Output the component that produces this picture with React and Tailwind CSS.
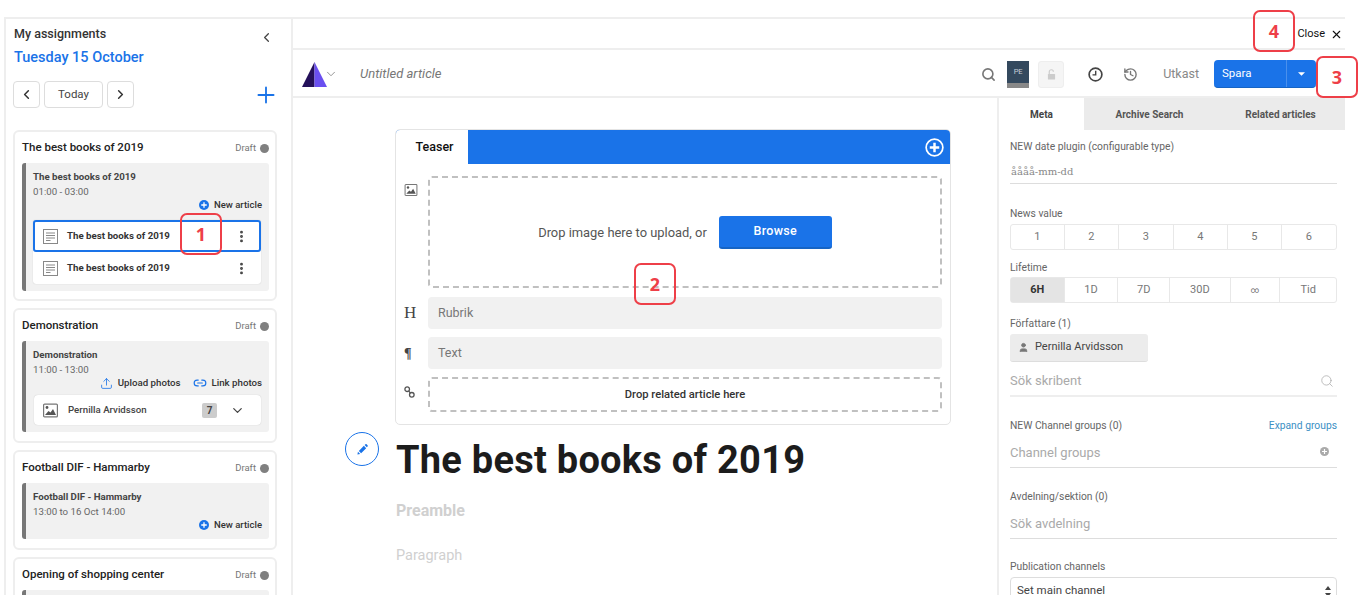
import React from 'react';
import { ChevronLeft, ChevronRight, ChevronDown, Plus, Search, X, User, Upload, Link2, History, MoreVertical } from 'lucide-react';

const PlusCircle = ({ className }) => (
    <svg viewBox="0 0 20 20" className={className}>
        <circle cx="10" cy="10" r="10" fill="currentColor" />
        <path d="M10 4.5v11M4.5 10h11" stroke="#fff" strokeWidth="2.6" />
    </svg>
);

const DocIcon = () => (
    <svg viewBox="0 0 15 15" className="w-[15px] h-[15px] shrink-0" fill="none" stroke="#888" strokeWidth="1">
        <rect x="0.5" y="0.5" width="14" height="14" fill="#fff" />
        <path d="M3 4h9M3 6.5h9M3 9h9M3 11.5h4.5" />
    </svg>
);

const PictureIcon = ({ className }) => (
    <svg viewBox="0 0 15 14" className={className}>
        <rect x="0.6" y="0.6" width="13.8" height="12.8" rx="1" fill="#fff" stroke="#777" strokeWidth="1.2" />
        <circle cx="4" cy="4" r="1.4" fill="#555" />
        <path d="M2 11.5 5.5 7.5 7.5 9 10 5.5 13 11.5Z" fill="#555" />
    </svg>
);

const LinkOutline = ({ className }) => (
    <svg viewBox="0 0 11 12" className={className} fill="none" stroke="#555" strokeWidth="1.3">
        <circle cx="3.2" cy="3.2" r="2.3" />
        <circle cx="7.8" cy="8.8" r="2.3" />
        <path d="M4.6 4.8 6.4 7" />
    </svg>
);

const Pencil = () => (
    <svg viewBox="0 0 12 12" className="w-[11px] h-[11px]" fill="#1a73e8">
        <path d="M0.5 11.5 1 8.5 3.5 11ZM2 7.5 7.5 2 10 4.5 4.5 10ZM8.3 1.2 9.2.4a1 1 0 0 1 1.3 0l1 1a1 1 0 0 1 0 1.3l-.8.9Z" />
    </svg>
);

const ClockIcon = () => (
    <svg viewBox="0 0 16 16" className="w-[15px] h-[15px]" fill="none" stroke="#444" strokeWidth="1.8">
        <circle cx="8" cy="8" r="6.8" />
        <path d="M8.2 4v4.4H4.8" strokeWidth="1.5" />
    </svg>
);

const OpenLock = () => (
    <svg viewBox="0 0 10 12" className="w-[9px] h-[11px]" fill="none">
        <path d="M2.5 5.5V3a2.3 2.3 0 0 1 4.6 0" stroke="#ccc" strokeWidth="1.3" />
        <rect x="1" y="5.5" width="8" height="6" rx="0.6" fill="#ccc" />
    </svg>
);

const Callout = ({ n, className }) => (
    <div className={`absolute w-[42px] h-[42px] border-2 border-[#ee3f48] rounded-[7px] bg-transparent flex items-center justify-center text-[#ee3f48] text-[18px] font-bold font-['Open_Sans',sans-serif] ${className}`}>
        {n}
    </div>
);

const Draft = () => (
    <div className="flex items-center gap-[4px] text-[9.5px] text-[#777]">
        Draft
        <span className="w-[9px] h-[9px] rounded-full bg-[#808080]" />
    </div>
);

const NewArticle = () => (
    <div className="flex items-center justify-end gap-[5px] pr-[7px] -mt-px text-[9.5px] font-medium text-[#333] h-[14px]">
        <PlusCircle className="w-[10px] h-[10px] text-[#1a73e8]" />
        New article
    </div>
);

const ArticleRow = ({ active }) => (
    <div className={`flex items-center h-[32px] pl-[8px] pr-[10px] border-2 text-[9.7px] font-bold text-[#333] ${active ? 'border-[#1a73e8] rounded-[3px] bg-white' : 'border-transparent'}`}>
        <DocIcon />
        <span className="ml-[9px] flex-1">The best books of 2019</span>
        <MoreVertical size={15} strokeWidth={2.6} className="text-[#444]" />
    </div>
);

const Assignment = ({ title, time, children, className }) => (
    <div className={`bg-white border-2 border-[#eee] rounded-[6px] pl-[7px] pr-[6px] shrink-0 overflow-hidden ${className}`}>
        <div className="flex items-center justify-between h-[31px] pt-px">
            <span className="text-[11.5px] font-medium text-[#222]">{title}</span>
            <Draft />
        </div>
        <div className="bg-[#f1f1f1] border-l-4 border-l-[#777] rounded-[3px] pl-[6px] pb-[7px] pt-[5px]">
            {children ? (
                <>
                    <div className="text-[9.7px] font-bold text-[#444] pl-[1px] pt-[2px] leading-[14px]">{title}</div>
                    <div className="text-[9.7px] text-[#666] pl-[1px] leading-[15px]">{time}</div>
                    {children}
                </>
            ) : (
                <div className="h-[40px]" />
            )}
        </div>
    </div>
);

const Segments = ({ items, active, widths }) => (
    <div className="flex border border-[#e8e8e8] rounded-[3px] h-[26px] text-[11px] text-[#777]">
        {items.map((item, i) => (
            <div
                key={item}
                className={`flex items-center justify-center border-r border-[#e8e8e8] last:border-r-0 ${item === active ? 'bg-[#e4e4e4] font-bold text-[#333]' : ''} ${item === '∞' ? 'text-[8.5px]' : ''}`}
                style={{ width: widths[i] }}
            >
                {item}
            </div>
        ))}
    </div>
);

const Label = ({ children, className }) => (
    <div className={`text-[10.3px] text-[#666] leading-[14px] ${className || ''}`}>{children}</div>
);

const Sidebar = () => (
    <aside className="w-[289px] shrink-0 border-x-2 border-[#eee] px-[8px] pt-[7px] overflow-hidden">
        <div className="flex justify-between">
            <div>
                <h2 className="text-[12.5px] font-medium text-[#333] leading-[16px]">My assignments</h2>
                <div className="text-[14.5px] font-medium text-[#1a73e8] mt-[6px] leading-[20px]">Tuesday 15 October</div>
            </div>
            <ChevronLeft size={15} className="text-[#444] mt-[4px] mr-[9px]" />
        </div>
        <div className="flex items-center mt-[13px] -ml-px gap-[4px]">
            <button className="w-[27px] h-[27px] border border-[#ddd] rounded-[4px] flex items-center justify-center"><ChevronLeft size={15} strokeWidth={2.4} className="text-[#333]" /></button>
            <button className="w-[59px] h-[27px] border border-[#ddd] rounded-[4px] text-[11.5px] text-[#444]">Today</button>
            <button className="w-[27px] h-[27px] border border-[#ddd] rounded-[4px] flex items-center justify-center"><ChevronRight size={15} strokeWidth={2.4} className="text-[#333]" /></button>
            <Plus size={26} strokeWidth={1.7} className="ml-auto mr-[4px] text-[#1a73e8]" />
        </div>
        <div className="flex flex-col gap-[7px] mt-[22px] -ml-px w-[264px]">
            <Assignment title="The best books of 2019" time="01:00 - 03:00" className="h-[171px]">
                <NewArticle />
                <div className="bg-white rounded-[3px] ml-[1px] mr-[8px] mt-[8px] shadow-[0_0_1px_#bbb]">
                    <ArticleRow active />
                    <ArticleRow />
                </div>
            </Assignment>
            <Assignment title="Demonstration" time="11:00 - 13:00" className="h-[135px]">
                <div className="flex justify-end items-center gap-[12px] pr-[7px] -mt-px h-[14px] text-[9.7px] font-medium text-[#333]">
                    <span className="flex items-center gap-[5px]"><Upload size={13} className="text-[#1a73e8]" strokeWidth={1.5} />Upload photos</span>
                    <span className="flex items-center gap-[5px]"><Link2 size={14} className="text-[#1a73e8]" />Link photos</span>
                </div>
                <div className="flex items-center bg-white rounded-[4px] ml-[2px] mr-[8px] mt-[5px] h-[30px] pl-[9px] pr-[16px] text-[9.7px] font-medium text-[#444] shadow-[0_0_1px_#bbb]">
                    <PictureIcon className="w-[15px] h-[15px]" />
                    <span className="ml-[10px] flex-1">Pernilla Arvidsson</span>
                    <span className="w-[15px] h-[15px] bg-[#ccc] rounded-[2px] flex items-center justify-center font-bold text-[10px]">7</span>
                    <ChevronDown size={15} className="ml-[13px] text-[#444]" />
                </div>
            </Assignment>
            <Assignment title="Football DIF - Hammarby" time="13:00 to 16 Oct 14:00" className="h-[100px]">
                <NewArticle />
            </Assignment>
            <Assignment title="Opening of shopping center" className="h-[80px]" />
        </div>
    </aside>
);

const Editor = () => (
    <main className="flex-1 relative pt-[31px] pl-[102px]">
        <div className="absolute left-[52px] top-[334px] w-[34px] h-[34px] rounded-full border border-[#1a73e8] flex items-center justify-center"><Pencil /></div>
        <section className="w-[556px] h-[296px] border border-[#e4e4e4] rounded-[5px] overflow-hidden">
            <div className="flex h-[34px] bg-[#1a73e8]">
                <div className="w-[72px] bg-white flex items-center justify-center pl-[5px] text-[12.5px] font-medium text-[#111]">Teaser</div>
                <div className="flex-1 flex items-center justify-end pr-[6px]">
                    <svg viewBox="0 0 20 20" className="w-[19px] h-[19px]" fill="none" stroke="#fff">
                        <circle cx="10" cy="10" r="8.8" strokeWidth="1.8" />
                        <path d="M10 5v10M5 10h10" strokeWidth="2.6" />
                    </svg>
                </div>
            </div>
            <div className="flex px-[8px] pt-[12px]">
                <PictureIcon className="w-[14px] h-[12px] mt-[8px]" />
                <div className="ml-[10px] w-[514px] h-[112px] border-2 border-dashed border-[#c0c0c0] rounded-[4px] flex items-center justify-center gap-[12px] text-[12.9px] text-[#555] pt-[1px]">
                    Drop image here to upload, or
                    <button className="w-[113px] h-[33px] bg-[#1a73e8] border-b-2 border-[#1664c4] rounded-[3px] text-[12.5px] tracking-[0.3px] font-medium text-white">Browse</button>
                </div>
            </div>
            <div className="flex items-center px-[8px] mt-[9px]">
                <span className="w-[14px] text-[17px] font-['Liberation_Serif',serif] text-[#444]">H</span>
                <div className="ml-[10px] w-[514px] h-[32px] bg-[#f1f1f1] rounded-[4px] flex items-center pl-[10px] text-[12.5px] text-[#777]">Rubrik</div>
            </div>
            <div className="flex items-center px-[8px] mt-[8px]">
                <span className="w-[14px] text-[14px] font-bold font-['Liberation_Serif',serif] text-[#444]">¶</span>
                <div className="ml-[10px] w-[514px] h-[32px] bg-[#f1f1f1] rounded-[4px] flex items-center pl-[10px] text-[12.5px] text-[#777]">Text</div>
            </div>
            <div className="flex items-center px-[8px] mt-[8px]">
                <span className="w-[14px]"><LinkOutline className="w-[11px] h-[12px] -mt-[6px]" /></span>
                <div className="ml-[10px] w-[514px] h-[35px] border-2 border-dashed border-[#c0c0c0] rounded-[4px] flex items-center justify-center pt-[1px] text-[11.2px] font-medium text-[#333]">Drop related article here</div>
            </div>
        </section>
        <div className="pl-[1px]">
            <h1 className="text-[38px] font-bold text-[#1c1c1c] leading-[44px] mt-[13px] tracking-[0.25px]">The best books of 2019</h1>
            <div className="text-[16px] font-bold text-[#d0d0d0] leading-[20px] mt-[19px]">Preamble</div>
            <div className="text-[14.5px] text-[#d0d0d0] leading-[20px] mt-[25px]">Paragraph</div>
        </div>
    </main>
);

const MetaPanel = () => (
    <aside className="w-[348px] shrink-0 border-l-2 border-[#eee] overflow-hidden">
        <div className="flex h-[32px] bg-[#ebebeb] text-[10px] font-bold text-[#555]">
            <div className="w-[85px] bg-white flex items-center justify-center text-[#444]">Meta</div>
            <div className="w-[131px] flex items-center justify-center">Archive Search</div>
            <div className="flex-1 flex items-center justify-center pl-[1px]">Related articles</div>
        </div>
        <div className="pl-[11px] pr-[8px]">
            <Label className="mt-[10px]">NEW date plugin (configurable type)</Label>
            <div className="h-[30px] border-b border-[#ddd] flex items-center pl-px text-[10px] text-[#888] font-['DejaVu_Serif',serif] pt-[5px]">åååå-mm-dd</div>
            <Label className="mt-[23px]">News value</Label>
            <div className="mt-[3px]"><Segments items={['1', '2', '3', '4', '5', '6']} widths={[54, 55, 55, 55, 54, 55]} /></div>
            <Label className="mt-[11px]">Lifetime</Label>
            <div className="mt-[2px]"><Segments items={['6H', '1D', '7D', '30D', '∞', 'Tid']} active="6H" widths={[54, 54, 52, 61, 50, 56]} /></div>
            <Label className="mt-[14px]">Författare (1)</Label>
            <div className="mt-[3px] w-[138px] h-[28px] bg-[#ececec] rounded-[3px] border-b border-[#ddd] flex items-center pl-[5px] text-[11px] text-[#444]">
                <span className="w-[16px] flex justify-center"><User size={11} fill="#777" className="text-[#777]" /></span>
                <span className="ml-[4px]">Pernilla Arvidsson</span>
            </div>
            <div className="h-[35px] border-b-2 border-[#eee] flex items-center justify-between text-[13px] text-[#aaa] pr-[3px] pt-[5px]">
                Sök skribent
                <Search size={14} strokeWidth={1.3} className="text-[#aaa]" />
            </div>
            <div className="flex justify-between mt-[22px]">
                <Label>NEW Channel groups (0)</Label>
                <span className="text-[10.3px] leading-[14px] text-[#3b8fc4]">Expand groups</span>
            </div>
            <div className="h-[35px] border-b border-[#ddd] flex items-center justify-between text-[13px] text-[#aaa] pr-[8px] pt-[6px]">
                Channel groups
                <PlusCircle className="w-[9px] h-[9px] text-[#aaa] -mt-[4px]" />
            </div>
            <Label className="mt-[22px]">Avdelning/sektion (0)</Label>
            <div className="h-[35px] border-b border-[#ddd] flex items-center text-[13px] text-[#aaa] pt-[5px]">Sök avdelning</div>
            <Label className="mt-[21px]">Publication channels</Label>
            <div className="mt-[3px] h-[28px] border border-[#ddd] rounded-[4px] flex items-center justify-between pl-[6px] pr-[5px] text-[11.5px] text-[#444]">
                Set main channel
                <svg viewBox="0 0 6 11" className="w-[6px] h-[11px]" fill="#444"><path d="M3 0 6 4H0ZM3 11 0 7h6Z" /></svg>
            </div>
        </div>
    </aside>
);

const App = () => {
    return (
        <div className="relative h-[595px] overflow-hidden bg-white pt-[17px] pl-[4px] font-['Roboto',sans-serif]">
            <div className="w-[1341px] h-[578px] border-t-2 border-[#eee] flex">
                <Sidebar />
                <div className="flex-1 min-w-0 flex flex-col">
                    <div className="h-[31px] shrink-0 border-b-2 border-[#eee] flex items-center justify-end pr-[1px] text-[11px] text-[#111]">
                        <span className="pt-[2px]">Close</span>
                        <X size={13} strokeWidth={2} className="ml-[5px] mr-[1px] mt-[1px] text-[#111]" />
                    </div>
                    <div className="h-[48px] shrink-0 border-b-2 border-[#eee] flex items-center pl-[9px] pr-[29px] pt-[2px]">
                        <svg viewBox="0 0 24 24" className="w-[25px] h-[25px]">
                            <path d="M12 0 0 24h12Z" fill="#24105a" />
                            <path d="M12 0 24 24H12Z" fill="#6a4ff0" />
                        </svg>
                        <ChevronDown size={14} strokeWidth={1.5} className="-ml-[3px] text-[#888]" />
                        <span className="ml-[22px] text-[13px] italic text-[#777]">Untitled article</span>
                        <Search size={15} strokeWidth={2.6} className="ml-auto -mr-px text-[#777]" />
                        <div className="ml-[12px] w-[22px] h-[27px] bg-[#34495e] border-b-[5px] border-b-[#888] text-[7.5px] text-[#c8d0d8] text-center pt-[5px]">PE</div>
                        <div className="ml-[9px] w-[26px] h-[27px] bg-[#f5f5f5] border border-[#eee] rounded-[3px] flex items-center justify-center"><OpenLock /></div>
                        <span className="ml-[24px]"><ClockIcon /></span>
                        <History size={15} strokeWidth={2.2} className="ml-[20px] text-[#777]" />
                        <span className="ml-[25px] text-[12.5px] text-[#888]">Utkast</span>
                        <div className="ml-[15px] w-[102px] h-[28px] bg-[#1a73e8] border-b border-[#1664c4] rounded-[4px] flex text-[11.5px] text-white">
                            <span className="w-[73px] flex items-center pl-[8px] pt-px border-r border-[#4a90ec]">Spara</span>
                            <span className="flex-1 flex items-center justify-center"><svg viewBox="0 0 8 4" className="w-[7px] h-[4px]" fill="#fff"><path d="M0 0h8L4 4Z" /></svg></span>
                        </div>
                    </div>
                    <div className="flex flex-1 min-h-0">
                        <Editor />
                        <MetaPanel />
                    </div>
                </div>
            </div>
            <Callout n="1" className="left-[180px] top-[213px]" />
            <Callout n="2" className="left-[634px] top-[263px]" />
            <Callout n="3" className="left-[1316px] top-[56px]" />
            <Callout n="4" className="left-[1253px] top-[10px]" />
        </div>
    );
};

export default App;
